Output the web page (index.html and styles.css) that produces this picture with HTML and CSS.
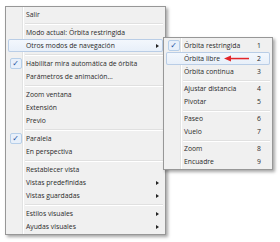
FILE: index.html
```
<!DOCTYPE html>
<html lang="es">

<head>
    <meta charset="UTF-8" />
    <meta name="viewport" content="width=device-width, initial-scale=1.0" />
    <title>Menú de navegación</title>
    <link rel="stylesheet" href="styles.css">
</head>

<body>
    <div class="screen">
        <!-- menú principal -->
        <div class="menu main">
            <div class="item"><span class="check"></span><span class="label">Salir</span></div>
            <div class="sep"></div>
            <div class="item"><span class="check"></span><span class="label">Modo actual: Órbita restringida</span></div>
            <div class="item hot"><span class="check"></span><span class="label">Otros modos de navegación</span><span class="arrow"></span></div>
            <div class="sep"></div>
            <div class="item checked"><span class="check"><i>✓</i></span><span class="label">Habilitar mira automática de órbita</span></div>
            <div class="item"><span class="check"></span><span class="label">Parámetros de animación...</span></div>
            <div class="sep"></div>
            <div class="item"><span class="check"></span><span class="label">Zoom ventana</span></div>
            <div class="item"><span class="check"></span><span class="label">Extensión</span></div>
            <div class="item"><span class="check"></span><span class="label">Previo</span></div>
            <div class="sep"></div>
            <div class="item checked"><span class="check"><i>✓</i></span><span class="label">Paralela</span></div>
            <div class="item"><span class="check"></span><span class="label">En perspectiva</span></div>
            <div class="sep"></div>
            <div class="item"><span class="check"></span><span class="label">Restablecer vista</span></div>
            <div class="item"><span class="check"></span><span class="label">Vistas predefinidas</span><span class="arrow"></span></div>
            <div class="item"><span class="check"></span><span class="label">Vistas guardadas</span><span class="arrow"></span></div>
            <div class="sep"></div>
            <div class="item"><span class="check"></span><span class="label">Estilos visuales</span><span class="arrow"></span></div>
            <div class="item"><span class="check"></span><span class="label">Ayudas visuales</span><span class="arrow"></span></div>
        </div>

        <!-- submenú: otros modos de navegación -->
        <div class="menu sub">
            <div class="item checked"><span class="check"><i>✓</i></span><span class="label">Órbita restringida</span><span class="key">1</span></div>
            <div class="item hot"><span class="check"></span><span class="label">Órbita libre</span><span class="key">2</span>
                <svg class="pointer" width="25" height="7" viewBox="0 0 25 7">
                    <polygon points="0,3.5 7,0.5 7,6.5" fill="#e3262a" />
                    <rect x="6" y="2.8" width="19" height="1.5" fill="#e3262a" />
                </svg>
            </div>
            <div class="item"><span class="check"></span><span class="label">Órbita continua</span><span class="key">3</span></div>
            <div class="sep"></div>
            <div class="item"><span class="check"></span><span class="label">Ajustar distancia</span><span class="key">4</span></div>
            <div class="item"><span class="check"></span><span class="label">Pivotar</span><span class="key">5</span></div>
            <div class="sep"></div>
            <div class="item"><span class="check"></span><span class="label">Paseo</span><span class="key">6</span></div>
            <div class="item"><span class="check"></span><span class="label">Vuelo</span><span class="key">7</span></div>
            <div class="sep"></div>
            <div class="item"><span class="check"></span><span class="label">Zoom</span><span class="key">8</span></div>
            <div class="item"><span class="check"></span><span class="label">Encuadre</span><span class="key">9</span></div>
        </div>
    </div>
</body>

</html>
```

FILE: styles.css
```
* {
    margin: 0;
    padding: 0;
    box-sizing: border-box;
}

body {
    background: #fff;
    font-family: "Open Sans", "Noto Sans", sans-serif;
    font-size: 6.8px;
    color: #2a2a2a;
}

.screen {
    position: relative;
    width: 280px;
    height: 242px;
    padding: 6px 0 0 5px;
}

/* 
    caja del menú, estilo Windows 7
*/
.menu {
    border: 1px solid #979797;
    padding: 1px 2px;
    background:
        linear-gradient(to right, transparent 16px, #e2e3e3 16px, #e2e3e3 17px, #fff 17px, #fff 18px, transparent 18px),
        #f0f0f0;
    box-shadow: 2px 2px 3px rgba(0, 0, 0, 0.35);
}

.main {
    width: 161px;
}

.sub {
    position: absolute;
    left: 163px;
    top: 37px;
    width: 110px;
}

.item {
    position: relative;
    height: 13px;
    display: flex;
    align-items: center;
    white-space: nowrap;
}

.check {
    width: 15px;
    height: 13px;
    flex: none;
    display: flex;
    align-items: center;
    justify-content: center;
}

.check i {
    font-style: normal;
    width: 12px;
    height: 11px;
    display: flex;
    align-items: center;
    justify-content: center;
    border: 1px solid #b7cfe9;
    border-radius: 2px;
    background: #e8f0fa;
    color: #1b4fa0;
    font-size: 8px;
    font-weight: bold;
    font-family: "DejaVu Sans", sans-serif;
}

.label {
    padding-left: 3px;
    flex: 1;
}

.hot {
    border-radius: 2px;
    box-shadow: inset 0 0 0 1px #b9cde6;
    background: linear-gradient(#f4f8fd, #e7eff9);
}

.arrow {
    width: 0;
    height: 0;
    margin-right: 4px;
    border-left: 3px solid #222;
    border-top: 2.5px solid transparent;
    border-bottom: 2.5px solid transparent;
}

.key {
    width: 13px;
    flex: none;
}

.sep {
    height: 5px;
    margin-left: 17px;
    background: linear-gradient(transparent 2px, #e0e0e0 2px, #e0e0e0 3px, #fff 3px, #fff 4px, transparent 4px);
}

.sub .sep {
    height: 4px;
}

.pointer {
    position: absolute;
    left: 58px;
    top: 3px;
}
```
